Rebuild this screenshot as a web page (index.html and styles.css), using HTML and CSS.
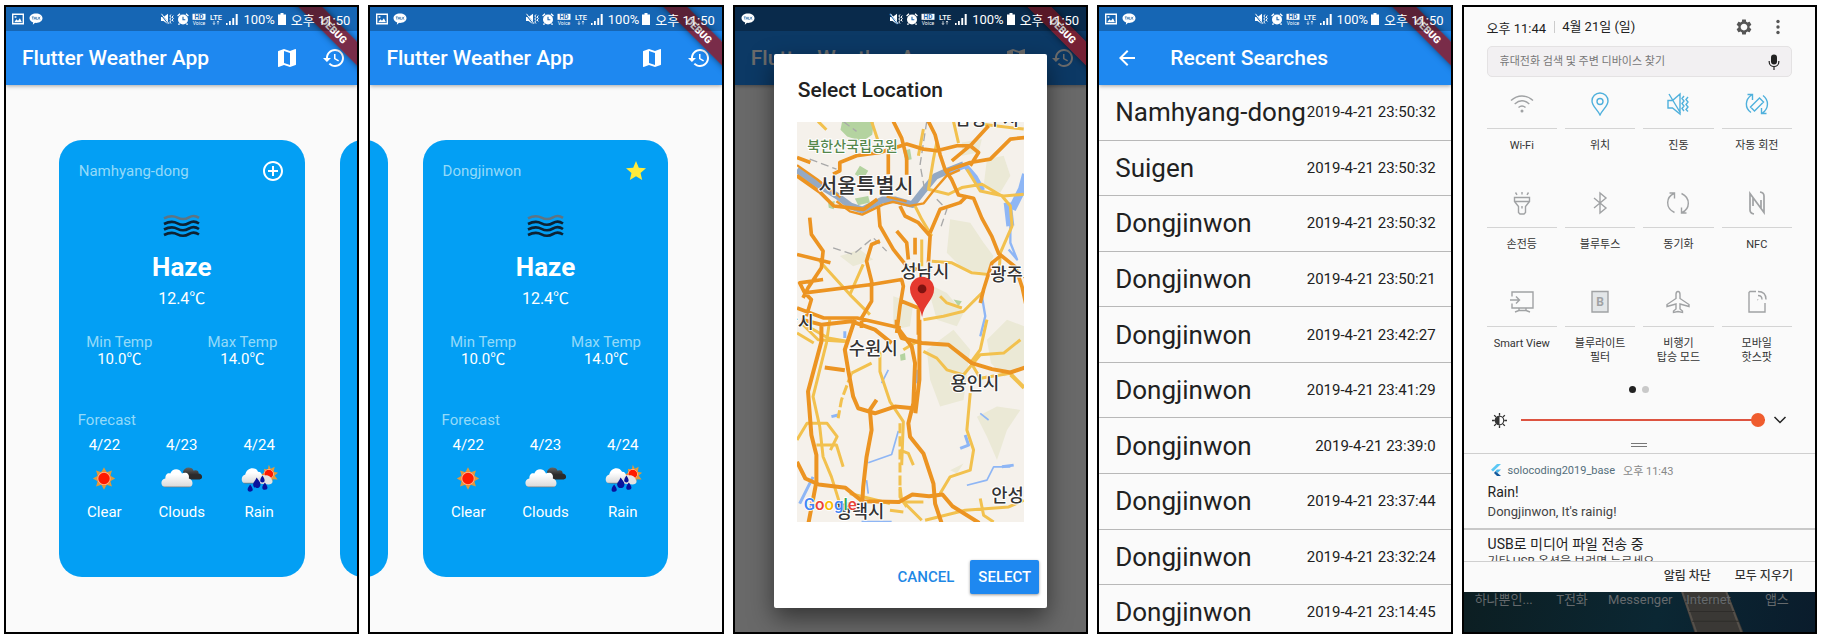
FILE: index.html
```html
<!DOCTYPE html>
<html lang="ko">
<head>
<meta charset="utf-8">
<meta name="viewport" content="width=device-width, initial-scale=1">
<title>Flutter Weather App</title>
<link rel="stylesheet" href="styles.css">
</head>
<body>
<svg class="sprite" aria-hidden="true">
  <symbol id="i-map" viewBox="0 0 24 24"><path d="M20.5 3l-.16.03L15 5.1 9 3 3.36 4.9c-.21.07-.36.25-.36.48V20.5c0 .28.22.5.5.5l.16-.03L9 18.9l6 2.1 5.64-1.9c.21-.07.36-.25.36-.48V3.5c0-.28-.22-.5-.5-.5zM15 19l-6-2.11V5l6 2.11V19z"/></symbol>
  <symbol id="i-history" viewBox="0 0 24 24"><path d="M13 3c-4.97 0-9 4.03-9 9H1l3.89 3.89.07.14L9 12H6c0-3.87 3.13-7 7-7s7 3.13 7 7-3.13 7-7 7c-1.93 0-3.68-.79-4.94-2.06l-1.42 1.42C8.27 19.99 10.51 21 13 21c4.97 0 9-4.03 9-9s-4.03-9-9-9zm-1 5v5l4.28 2.54.72-1.21-3.5-2.08V8H12z"/></symbol>
  <symbol id="i-back" viewBox="0 0 24 24"><path d="M20 11H7.83l5.59-5.59L12 4l-8 8 8 8 1.41-1.41L7.83 13H20v-2z"/></symbol>
  <symbol id="i-add" viewBox="0 0 24 24"><path d="M13 7h-2v4H7v2h4v4h2v-4h4v-2h-4V7zm-1-5C6.48 2 2 6.48 2 12s4.48 10 10 10 10-4.48 10-10S17.52 2 12 2zm0 18c-4.41 0-8-3.59-8-8s3.59-8 8-8 8 3.59 8 8-3.59 8-8 8z"/></symbol>
  <symbol id="i-star" viewBox="0 0 24 24"><path d="M12 17.27L18.18 21l-1.64-7.03L22 9.24l-7.19-.61L12 2 9.19 8.63 2 9.24l5.46 4.73L5.82 21z"/></symbol>
  <symbol id="i-picture" viewBox="0 0 12 12"><path fill-rule="evenodd" d="M0 .5h12v11H0zM1.400 1.900v8.200h9.200V1.900zM2.200 9.200l2.200-3 1.600 1.600 1.900-2.600 2 4zM2.600 3.200h1.800v1.500H2.600z"/></symbol>
  <symbol id="i-talk" viewBox="0 0 14 12"><path d="M7 .5c3.600 0 6.500 2.100 6.500 4.700S10.600 9.900 7 9.900l-.9-.1L3.800 11.700l.4-2.300C2 8.700.5 7.100.5 5.200.5 2.600 3.400.5 7 .5z"/><path d="M2.800 3.900h2M3.800 3.900v2.600M5.200 6.500l.8-2.600.8 2.600M7.700 3.900v2.600h1M9.800 3.900v2.600M11.300 3.900L9.800 5.200l1.500 1.300" fill="none" stroke="#2a6ba8" stroke-width=".7"/></symbol>
  <symbol id="i-vibrate-s" viewBox="0 0 14 12"><path d="M1 4h2.500L8 .8v10.400L3.500 8H1z"/><path d="M.8 1l8 10" stroke="#1a66b0" stroke-width="1.600"/><path d="M1.500.8l7.500 10M11 1.500l-1.200 1.500L11 4.500 9.800 6 11 7.500 9.800 9l1.200 1.500M13.300 2.500L12.200 4l1.100 1.500L12.200 7l1.100 1.500" fill="none" stroke="#fff" stroke-width="1"/></symbol>
  <symbol id="i-alarm-s" viewBox="0 0 12 12"><circle cx="6" cy="6.500" r="5"/><path d="M.6 3L3 .8M11.400 3L9 .8M2.500 10.500l-1 1.200M9.500 10.500l1 1.200" stroke="#fff" stroke-width="1.400"/><path d="M6 3.800v3h2.300" fill="none" stroke="#1a66b0" stroke-width="1.100"/></symbol>
  <symbol id="i-hd" viewBox="0 0 14 12"><path d="M.5.8h13v6H.5z"/><text x="7" y="6" font-size="6.500" font-weight="700" text-anchor="middle" fill="#1a66b0">HD</text><text x="7" y="11.500" font-size="5" text-anchor="middle">Voice</text></symbol>
  <symbol id="i-lte" viewBox="0 0 14 12"><text x="7" y="6.500" font-size="7.500" font-weight="500" text-anchor="middle">LTE</text><path d="M5 8v3.500M4 10.300l1 1.200 1-1.200M9 11.500V8M8 9.200L9 8l1 1.200" fill="none" stroke="#fff" stroke-width=".7"/></symbol>
  <symbol id="i-signal" viewBox="0 0 12 12"><path d="M0 10h1.600v2H0zM3 8h1.800v4H3zM6.300 5h1.900v7H6.300zM9.700 1h2v11h-2z"/></symbol>
  <symbol id="i-battery" viewBox="0 0 8 12"><path d="M2.500 0h3v1.500H8V12H0V1.500h2.500z"/></symbol>

  <symbol id="w-haze" viewBox="0 0 50 50"><g fill="none" stroke-width="2.600"><path stroke="#5e7483" d="M7 17.300c6-3 10-2.500 13.500-.7s7.500 2 11.500-.3 7-1.500 10 .5"/><path stroke="#0d2233" d="M7 23c6-3 10-2.500 13.500-.7s7.500 2 11.500-.3 7-1.500 10 .5M7 28.500c6-3 10-2.500 13.500-.7s7.500 2 11.500-.3 7-1.500 10 .5M7 34c6-3 10-2.500 13.500-.7s7.500 2 11.500-.3 7-1.500 10 .5"/></g></symbol>
  <radialGradient id="g-sun"><stop offset="0" stop-color="#ff1a00"/><stop offset=".72" stop-color="#ff1a00"/><stop offset=".86" stop-color="#ffb08c"/><stop offset="1" stop-color="#e88a28"/></radialGradient>
  <linearGradient id="g-cloud" x1="0" y1="0" x2="0" y2="1"><stop offset=".3" stop-color="#fff"/><stop offset=".92" stop-color="#dcdcdc"/><stop offset="1" stop-color="#777"/></linearGradient>
  <linearGradient id="g-dark" x1="0" y1="0" x2="0" y2="1"><stop offset="0" stop-color="#666"/><stop offset=".6" stop-color="#2b2b2b"/></linearGradient>
  <symbol id="w-sun" viewBox="0 0 48 48"><path fill="#e09a3c" d="M24 12.500l2.700 5 5.400-1.700-1.600 5.500 4.900 2.700-4.900 2.700 1.600 5.500-5.400-1.700-2.700 5-2.700-5-5.400 1.700 1.600-5.500-4.900-2.700 4.900-2.700-1.600-5.500 5.400 1.700z"/><circle cx="24" cy="24" r="7.300" fill="url(#g-sun)"/></symbol>
  <symbol id="w-clouds" viewBox="0 0 48 48"><path fill="url(#g-dark)" d="M25 17c1-3 4-5 7-4 2 0 3 1 4 3 3-1 5 0 5 3 4 0 5 6 1 6H29z"/><path fill="url(#g-cloud)" d="M8 33c-7 0-6-9-1-9 0-5 3-6 5-5 2-6 10-6 12 0 4-2 8 0 7 5 5 1 5 9 0 9z"/></symbol>
  <symbol id="w-rain" viewBox="0 0 48 48"><path fill="#e09a3c" d="M34 10l2 4 4-2-1 5 4.500 1-3.500 3 3 4-5-.3-1 4.300-4-3-5 1 2-4-4-3 4-2-1-4 4 1z"/><circle cx="34" cy="19.500" r="5.500" fill="url(#g-sun)"/><path fill="url(#g-cloud)" d="M11 29c-6 1-6-8-1-9 1-7 10-9 13-3 3 0 4 2 4 4 5-2 8 8 2 8z"/><path fill="#e4e4e4" d="M24 29c-3-6 2-8 6-8 3-1 7 2 7 4 2 3 0 5-3 5z"/><path fill="#0a139c" d="M21.500 23c3 4 4 5 4 7 0 5-7.500 5-7.500 0 0-2 2-3 3.500-7zM27.500 21c3 4 3 7 0 7s-3-3 0-7zM15 30c3 4 4 7 0 7.500-4 0-3-4 0-7.500zM30 28c3 4 4 7 0 7.500-4 0-3-4 0-7.500z"/></symbol>
</svg>

<main class="gallery">

  <section class="phone">
    <div class="statusbar">
      <svg class="s12"><use href="#i-picture"/></svg><svg class="s14"><use href="#i-talk"/></svg>
      <div class="statusbar-right">
        <svg class="s14"><use href="#i-vibrate-s"/></svg><svg class="s12"><use href="#i-alarm-s"/></svg><svg class="s14"><use href="#i-hd"/></svg><svg class="s14"><use href="#i-lte"/></svg><svg class="s12"><use href="#i-signal"/></svg>
        <span>100%</span><svg class="s8"><use href="#i-battery"/></svg><span>오후 11:50</span>
      </div>
    </div>
    <header class="appbar">
      <h1>Flutter Weather App</h1>
      <button class="icon-btn" aria-label="Map"><svg><use href="#i-map"/></svg></button>
      <button class="icon-btn" aria-label="History"><svg><use href="#i-history"/></svg></button>
    </header>
    <div class="debug">DEBUG</div>
    <div class="carousel carousel-first">
      <article class="card">
        <div class="card-head"><span class="soft">Namhyang-dong</span><button class="icon-btn" aria-label="Add"><svg><use href="#i-add"/></svg></button></div>
        <svg class="now-icon"><use href="#w-haze"/></svg>
        <h2>Haze</h2>
        <p class="now-temp">12.4℃</p>
        <dl class="range"><div><dt>Min Temp</dt><dd>10.0℃</dd></div><div><dt>Max Temp</dt><dd>14.0℃</dd></div></dl>
        <h3>Forecast</h3>
        <ul class="forecast">
          <li><span>4/22</span><svg><use href="#w-sun"/></svg><span>Clear</span></li>
          <li><span>4/23</span><svg><use href="#w-clouds"/></svg><span>Clouds</span></li>
          <li><span>4/24</span><svg><use href="#w-rain"/></svg><span>Rain</span></li>
        </ul>
      </article>
      <article class="card"></article>
    </div>
  </section>

  <section class="phone">
    <div class="statusbar">
      <svg class="s12"><use href="#i-picture"/></svg><svg class="s14"><use href="#i-talk"/></svg>
      <div class="statusbar-right">
        <svg class="s14"><use href="#i-vibrate-s"/></svg><svg class="s12"><use href="#i-alarm-s"/></svg><svg class="s14"><use href="#i-hd"/></svg><svg class="s14"><use href="#i-lte"/></svg><svg class="s12"><use href="#i-signal"/></svg>
        <span>100%</span><svg class="s8"><use href="#i-battery"/></svg><span>오후 11:50</span>
      </div>
    </div>
    <header class="appbar">
      <h1>Flutter Weather App</h1>
      <button class="icon-btn" aria-label="Map"><svg><use href="#i-map"/></svg></button>
      <button class="icon-btn" aria-label="History"><svg><use href="#i-history"/></svg></button>
    </header>
    <div class="debug">DEBUG</div>
    <div class="carousel carousel-second">
      <article class="card"></article>
      <article class="card">
        <div class="card-head"><span class="soft">Dongjinwon</span><button class="icon-btn starred" aria-label="Remove"><svg><use href="#i-star"/></svg></button></div>
        <svg class="now-icon"><use href="#w-haze"/></svg>
        <h2>Haze</h2>
        <p class="now-temp">12.4℃</p>
        <dl class="range"><div><dt>Min Temp</dt><dd>10.0℃</dd></div><div><dt>Max Temp</dt><dd>14.0℃</dd></div></dl>
        <h3>Forecast</h3>
        <ul class="forecast">
          <li><span>4/22</span><svg><use href="#w-sun"/></svg><span>Clear</span></li>
          <li><span>4/23</span><svg><use href="#w-clouds"/></svg><span>Clouds</span></li>
          <li><span>4/24</span><svg><use href="#w-rain"/></svg><span>Rain</span></li>
        </ul>
      </article>
    </div>
  </section>

  <section class="phone">
    <div class="statusbar">
      <svg class="s14"><use href="#i-talk"/></svg>
      <div class="statusbar-right">
        <svg class="s14"><use href="#i-vibrate-s"/></svg><svg class="s12"><use href="#i-alarm-s"/></svg><svg class="s14"><use href="#i-hd"/></svg><svg class="s14"><use href="#i-lte"/></svg><svg class="s12"><use href="#i-signal"/></svg>
        <span>100%</span><svg class="s8"><use href="#i-battery"/></svg><span>오후 11:50</span>
      </div>
    </div>
    <header class="appbar">
      <h1>Flutter Weather App</h1>
      <button class="icon-btn" aria-label="Map"><svg><use href="#i-map"/></svg></button>
      <button class="icon-btn" aria-label="History"><svg><use href="#i-history"/></svg></button>
    </header>
    <div class="scrim">
      <div class="dialog" role="dialog" aria-label="Select Location">
        <h2>Select Location</h2>
        <svg class="map" viewBox="52 37 680 1200" preserveAspectRatio="xMidYMid slice">
          <path fill="#f5f1eb" d="M0 0h800v1300H0z"/>
          <g fill="#ebe9d6">
            <path d="M620 150l50-10 20 60-30 50-50-20zM510 330l60 10 40 60 30 40-20 50-70-10-50-50zM545 100l60-10-10 40-50 10zM340 560l60 20-10 70-50 10zM440 520l60 30 50 60-20 40-60-20zM180 440l60-20 40 30-60 20z"/>
            <path d="M440 720l80-60 50 60-20 150-70 20-30-80zM620 690l60-60 52 20v120l-60 30-40-40zM590 920l60-30 70 10-40 60-30 90-30-70zM510 1080l40-20-20 30z"/>
          </g>
          <g fill="#b4d3a0"><path d="M187 37h95l-5 40-30 20-45-15-20-20zM240 170l25 15-15 25-25-15zM370 125l20-5 5 30-20 5zM225 268l40-8 5 20-35 8zM520 570l25 5-10 15zM145 280l20-5-3 25-15-5zM360 735l15-5 2 20-15 3z"/></g>
          <g fill="none" stroke="#8eb6f5" stroke-linejoin="round">
            <path stroke="#94a9c4" stroke-width="20" d="M52 182l60 42 60 36 40 30 35 12 60-30 40 0 50 14 30-38 38-46 40-18 45-18"/>
            <path stroke-width="16" d="M510 187l45-18 30 35 22 40"/>
            <path stroke-width="24" d="M690 350l-8-70M695 300l30-60 12-45"/>
            <path stroke-width="7" d="M690 340l0 60 20 50-25-30M605 560l10 60-15 60"/>
            <path stroke-width="5" d="M265 1058l70-25 20-70M325 780l-20 40M560 1125l60-15 20-40 50 0M260 1110l5 40M600 910l25 20"/>
            <path stroke-width="9" d="M100 1100l-40 80M195 665v20M155 920l20-5M540 1015l25-10-10-30M665 1070l35-5M410 780v40M245 1236h90"/>
          </g>
          <g fill="none" stroke="#a9a9a9" stroke-width="4" stroke-dasharray="24 12">
            <path d="M440 37l-20 130 15 80M90 150l80 30M160 415l60 20 60-50 40 40M470 270l30 30-20 60M190 37l40 30"/>
          </g>
          <g fill="none" stroke="#f2c14e" stroke-width="9" stroke-linejoin="round">
            <path d="M115 37l25 25M520 37l15 65M430 60l-15 80M470 100l-10 50-15 90 60 15 40-20 60-10 60 35 25 30 5 60-35 80-5 80M560 180l40 65 70 15 60-5"/>
            <path d="M405 290l20 40 30 50M120 455l90 100 60 60M210 555l40-90M455 455l60 5 60 30 50 5M480 560l20 20 45 15M430 630l60-10 60-15 60-60"/>
            <path d="M425 390l0 80M275 37l20 60M600 45l130 15M75 645l70 40 60 10M52 670l50 30"/>
          </g>
          <g transform="translate(0 630)" fill="none" stroke="#f2c14e" stroke-width="9" stroke-linejoin="round">
            <path d="M65 10l50 50 80 5M150 0l-10 70-40 160 20 90 10 90 25 60 25 80M52 360l30-50 60 0 30 40-20 40M110 375l60 0 20 65M215 160l60-30M300 95l0 60 30 90 40 60-5 130M360 390l25 10 15 35"/>
            <path d="M420 60l-50 30M430 95l40 20 30 35 50 15 50-60 70-5 50-40M620 0l-20 90-30 40M570 220l-10 110 20 60-10 60-60 20-30 50M360 500l5 40 60 60M370 545l60 0M330 570l40 5M435 600l120-30 130-10 45-20M600 535l10 50 30 20M210 520l120 30M690 165l40 40M730 200l-40-40-90 15-30-50"/>
            <path stroke-dasharray="30 9" d="M215 160l-30 80-10 55M360 310l0 120 0 100 20 30"/>
          </g>
          <g fill="none" stroke="#ec9422" stroke-width="11" stroke-linejoin="round">
            <path stroke-width="7" d="M52 168l60 42 30 24 40 30M52 198l70 50M170 276l40 30 37 10 62-30 30-8 50 12 42-8 30-38 38-44 40-18M320 262l60 14"/>
            <path d="M52 145l40 15M160 195l20-10 0-25 50-20 70-10 80-25 50 15 40 5 60-15 40 0 25 20-25 40M340 37l25 50 15 60 0 50M325 195v-60M445 37l20 40 15 60 15 45 20 30 20 45 45 10 25 60 30 55 20 50 50 40 20 60 20 90M52 200l70 50 40 40 90 10 40-30M500 185l70-25 60-10 60-60 45-5M515 155l60-50 50-55"/>
            <path d="M295 290l5 60 40 70 40 50 30 10M360 290l15 30 40 20 35 40-5 80M350 365l30 35 5 50M405 385l0 50M450 370l30-70 60-20 20-20M90 325l5 50 35 50-5 50-40 60-15 30M52 435l100 25M300 395l-25 10-15 50 15 60 0 60-30 50 0 30M52 595l80 30 100 0 130 30M75 550l200-25 90-15 5 20-10 60-10 80M75 550l-15-30 70-10M75 550l20 20-15 50M415 590l0 85M365 575l50 20M660 440l-25 20-25 80-10 40"/>
          </g>
          <g transform="translate(0 630)" fill="none" stroke="#ec9422" stroke-width="12" stroke-linejoin="round">
            <path d="M65 0l60 15 90-10 70 25 50 40M125 15l0 50-40 150 10 130 15 60 0 80-25 130M225 0l-30 90 10 60 15 80 15 35 50 15 60-20 55 5M135 143l60 8M290 240l-20 30 5 60-15 80-10 90-3 50M350 0l0 20 45 60 10 50-5 120-15 60 5 40 40 50 30 90 5 60 20 60M418 0v180l-12 100"/>
            <path d="M350 15l15 40 60 15 80 5 70 55 60 18 55 10 45-15M52 425l25 50 40 18 80 10 50 40 110 2 40-22 50 5 40-5 30 35 80 50"/>
          </g>
          <g class="map-labels" text-anchor="middle">
            <text x="218" y="127" font-size="42" class="park">북한산국립공원</text>
            <text x="620" y="48" font-size="52">남양주시</text>
            <text x="258" y="252" font-size="62">서울특별시</text>
            <text x="434" y="506" font-size="53">성남시</text>
            <text x="703" y="514" font-size="53">광주시</text>
            <text x="30" y="654" font-size="52">안산시</text>
            <text x="280" y="736" font-size="53">수원시</text>
            <text x="584" y="840" font-size="53">용인시</text>
            <text x="706" y="1176" font-size="53">안성시</text>
            <text x="240" y="1222" font-size="53">평택시</text>
          </g>
          <path fill="#e5392f" d="M426 622c-5-38-36-52-36-84a36 36 0 0 1 72 0c0 32-31 46-36 84z"/><circle cx="426" cy="538" r="13" fill="#7f1310"/>
          <text class="google" x="72" y="1200" font-size="50"><tspan fill="#4285f4">G</tspan><tspan fill="#ea4335">o</tspan><tspan fill="#fbbc05">o</tspan><tspan fill="#4285f4">g</tspan><tspan fill="#34a853">l</tspan><tspan fill="#ea4335">e</tspan></text>
        </svg>
        <div class="dialog-actions"><button class="flat">CANCEL</button><button class="raised">SELECT</button></div>
      </div>
    </div>
    <div class="debug">DEBUG</div>
  </section>

  <section class="phone">
    <div class="statusbar">
      <svg class="s12"><use href="#i-picture"/></svg><svg class="s14"><use href="#i-talk"/></svg>
      <div class="statusbar-right">
        <svg class="s14"><use href="#i-vibrate-s"/></svg><svg class="s12"><use href="#i-alarm-s"/></svg><svg class="s14"><use href="#i-hd"/></svg><svg class="s14"><use href="#i-lte"/></svg><svg class="s12"><use href="#i-signal"/></svg>
        <span>100%</span><svg class="s8"><use href="#i-battery"/></svg><span>오후 11:50</span>
      </div>
    </div>
    <header class="appbar appbar-back">
      <button class="icon-btn" aria-label="Back"><svg><use href="#i-back"/></svg></button>
      <h1>Recent Searches</h1>
    </header>
    <div class="debug">DEBUG</div>
    <ul class="searches">
      <li><span>Namhyang-dong</span><time>2019-4-21 23:50:32</time></li>
      <li><span>Suigen</span><time>2019-4-21 23:50:32</time></li>
      <li><span>Dongjinwon</span><time>2019-4-21 23:50:32</time></li>
      <li><span>Dongjinwon</span><time>2019-4-21 23:50:21</time></li>
      <li><span>Dongjinwon</span><time>2019-4-21 23:42:27</time></li>
      <li><span>Dongjinwon</span><time>2019-4-21 23:41:29</time></li>
      <li><span>Dongjinwon</span><time>2019-4-21 23:39:0</time></li>
      <li><span>Dongjinwon</span><time>2019-4-21 23:37:44</time></li>
      <li><span>Dongjinwon</span><time>2019-4-21 23:32:24</time></li>
      <li><span>Dongjinwon</span><time>2019-4-21 23:14:45</time></li>
    </ul>
  </section>

  <section class="phone shade">
    <div class="quick">
      <header class="quick-head">
        <span class="clock">오후 11:44</span><span class="date">4월 21일 (일)</span>
        <button class="mini-btn" aria-label="설정"><svg viewBox="0 0 24 24"><path d="M19.430 12.980c.04-.32.07-.64.07-.98s-.03-.66-.07-.98l2.110-1.650c.19-.15.24-.42.12-.64l-2-3.460c-.12-.22-.39-.3-.61-.22l-2.490 1c-.52-.4-1.080-.73-1.690-.98l-.38-2.650C14.460 2.180 14.250 2 14 2h-4c-.25 0-.46.18-.49.42l-.38 2.650c-.61.25-1.170.59-1.690.98l-2.490-1c-.23-.09-.49 0-.61.22l-2 3.460c-.13.22-.07.49.12.64l2.110 1.650c-.04.32-.07.65-.07.98s.03.66.07.98l-2.110 1.650c-.19.15-.24.42-.12.64l2 3.460c.12.22.39.3.61.22l2.490-1c.52.4 1.080.73 1.690.98l.38 2.650c.03.24.24.42.49.42h4c.25 0 .46-.18.49-.42l.38-2.650c.61-.25 1.170-.59 1.690-.98l2.490 1c.23.09.49 0 .61-.22l2-3.460c.12-.22.07-.49-.12-.64l-2.110-1.650zM12 16.500c-2.480 0-4.500-2.020-4.500-4.500s2.020-4.500 4.500-4.500 4.500 2.020 4.500 4.500-2.020 4.500-4.500 4.500z"/></svg></button>
        <button class="mini-btn" aria-label="더보기"><svg viewBox="0 0 18 18"><circle cx="9" cy="3.500" r="1.700"/><circle cx="9" cy="9" r="1.700"/><circle cx="9" cy="14.500" r="1.700"/></svg></button>
      </header>
      <div class="search">
        <input type="text" aria-label="검색" placeholder="휴대전화 검색 및 주변 디바이스 찾기">
        <svg viewBox="0 0 18 18"><rect x="6" y="1.500" width="6" height="10" rx="3"/><path d="M4.200 8v1c0 6 9.600 6 9.600 0V8M9 13.500V17" fill="none" stroke="#222" stroke-width="1.200"/></svg>
      </div>
      <div class="tiles">
        <button class="tile"><svg viewBox="0 0 24 24"><path d="M1 8.500c6.500-6 15.500-6 22 0M4.700 12c4.500-4 10-4 14.600 0M8.500 15.500c2.200-1.800 4.800-1.800 7 0"/><circle cx="12" cy="19" r=".8" fill="currentColor"/></svg><span>Wi-Fi</span></button>
        <button class="tile on"><svg viewBox="0 0 24 24"><path d="M12 23C9 17 4 14 4 9a8 8 0 0 1 16 0c0 5-5 8-8 14z"/><circle cx="12" cy="9.500" r="3"/></svg><span>위치</span></button>
        <button class="tile on"><svg viewBox="0 0 24 24"><path d="M2 8.500h4.500L14 2v20l-7.500-6H2zM3 2l11.500 19M18 4l-2 2.500L18 9l-2 2.500 2 2.500-2 2.500 2 2.500M22 5l-2 2.500 2 2.500-2 2.500 2 2.500-2 2.500 2 2"/></svg><span>진동</span></button>
        <button class="tile on"><svg viewBox="0 0 24 24"><path d="M14.500 6l4 4-9 9-4-4zM6 20.500C-.5 16 0 7.500 6.500 3M2.500 2.500h5V8M18 3.500c6 4.500 6 13-.5 17.500M21.500 21.500h-5V16"/></svg><span>자동 회전</span></button>
        <button class="tile"><svg viewBox="0 0 24 24"><path d="M4.500 6.500h15v4l-4 5v6l-1.500 1.500h-4L8.500 21.500v-6l-4-5zM5 10.500h14M12 15v2.500M12 1v2.500M5.500 1.500L7 3.800M18.500 1.500L17 3.800"/></svg><span>손전등</span></button>
        <button class="tile"><svg viewBox="0 0 24 24"><path d="M6 7l12 10-6 5V2l6 5L6 17"/></svg><span>블루투스</span></button>
        <button class="tile"><svg viewBox="0 0 24 24"><path d="M8.500 21.500C-1 17 0 6 8 2.500M3.500 2h5v5.500M15.500 2.500C25 7 24 18 16 21.500M20.500 22h-5v-5.500"/></svg><span>동기화</span></button>
        <button class="tile"><svg viewBox="0 0 24 24"><path stroke-width="1.700" d="M9 23c-3-.5-4-1.500-4-4V2.500L16 17.500V9M15 1c3 .5 4 1.500 4 4v16.500L8 6.500V15"/></svg><span>NFC</span></button>
        <button class="tile"><svg viewBox="0 0 24 24"><path d="M2 6.500V2h21v16H2v-4.500M0 10h9M6 6.500l3.500 3.500L6 13.500M9 18v2.500l-4 1.500M16 18v2.500l4 1.500M9 20.500h7"/></svg><span>Smart View</span></button>
        <button class="tile"><svg viewBox="0 0 24 24"><path fill="#e3e6e8" d="M4 1.500h16v20.500H4z"/><text x="12" y="16" text-anchor="middle" font-size="12" font-weight="700" fill="currentColor" stroke="none">B</text></svg><span>블루라이트<br>필터</span></button>
        <button class="tile"><svg viewBox="0 0 24 24"><path d="M12 1.500c1.300 0 2 1.500 2 3v4l9 6v2l-9-2.500v5l2.500 2v1.500L12 21.500 7.500 22.500V21l2.500-2v-5L1 16.500v-2l9-6v-4c0-1.500.7-3 2-3z"/></svg><span>비행기<br>탑승 모드</span></button>
        <button class="tile"><svg viewBox="0 0 24 24"><path d="M11 1.500H5L4 2.500V22h16v-9M12.500 9.500l.5.500M13 5.500c2.500 0 4 1.500 4 4M13 1.500c5 0 8 3 8 8"/></svg><span>모바일<br>핫스팟</span></button>
      </div>
      <div class="dots"><i class="active"></i><i></i></div>
      <div class="brightness">
        <svg viewBox="0 0 16 16"><path d="M8 0v3M8 13v3M0 8h3M13 8h3M2.300 2.300l2 2M11.700 11.700l2 2M13.700 2.300l-2 2M4.300 11.700l-2 2" stroke="#333" stroke-width="1.400"/><circle cx="8" cy="8" r="4.500" fill="none" stroke="#333" stroke-width="1.200"/><path d="M8 3.500a4.500 4.500 0 0 0 0 9z"/></svg>
        <input type="range" aria-label="밝기" min="0" max="100" value="100">
        <button class="mini-btn" aria-label="펼치기"><svg viewBox="0 0 18 18"><path d="M3.500 6L9 11.500 14.500 6" fill="none" stroke="#222" stroke-width="1.500"/></svg></button>
      </div>
      <div class="handle"></div>
    </div>
    <article class="notice">
      <p class="notice-app"><svg viewBox="0 0 12 12"><path fill="#5bc8f5" d="M7 0h4L3 7.500 1 5.800z"/><path fill="#4ab6ea" d="M7 5.500h4L7.500 9 5.300 7.300z"/><path fill="#14599c" d="M5.300 7.300L7.500 9l3.500 3H7L4 9z"/></svg><b>solocoding2019_base</b><time>오후 11:43</time></p>
      <h3>Rain!</h3>
      <p class="notice-text">Dongjinwon, It's rainig!</p>
    </article>
    <article class="notice usb">
      <h3>USB로 미디어 파일 전송 중</h3>
      <p>기타 USB 옵션을 보려면 누르세요.</p>
    </article>
    <footer class="shade-actions"><button>알림 차단</button><button>모두 지우기</button></footer>
    <div class="wallpaper">
      <svg viewBox="0 0 351 41" preserveAspectRatio="none" aria-hidden="true"><path fill="#3a3835" d="M217 0h46l16 41h-49z"/><path stroke="#55504a" stroke-width="2" d="M218 0l14 41M262 0l15 41"/><path stroke="#2e2c2a" d="M221 10h45M225 20h45M228 30h47"/></svg>
      <ul><li>하나뿐인...</li><li>T전화</li><li>Messenger</li><li>Internet</li><li>앱스</li></ul>
    </div>
  </section>
</main>
</body>
</html>
```
FILE: styles.css
```css
* { box-sizing: border-box; }

body {
  margin: 0;
  background: #fff;
  color: #212121;
  font-family: Roboto, "Noto Sans CJK KR", sans-serif;
}

h1, h2, h3, p, ul, dl, dd { margin: 0; padding: 0; }
ul { list-style: none; }
button { border: 0; padding: 0; background: none; color: inherit; font: inherit; }

.sprite { position: absolute; width: 0; height: 0; }

.gallery {
  display: grid;
  grid-template-columns: repeat(5, minmax(0, 1fr));
  gap: 9px;
  height: 100vh;
  min-height: 640px;
  padding: 5px 5px 6px 4px;
}

.phone {
  position: relative;
  display: flex;
  flex-direction: column;
  overflow: hidden;
  border: 2px solid #000;
  background: #fafafa;
}

/* Status bar */
.statusbar {
  position: relative;
  z-index: 3;
  display: flex;
  flex: none;
  align-items: center;
  gap: 5px;
  height: 24px;
  padding: 0 7px 0 6px;
  background: rgba(0, 0, 0, .25);
  color: #fff;
  fill: #fff;
  font-size: 13px;
}
.statusbar-right { display: flex; align-items: center; gap: 3px; margin-left: auto; }
.statusbar-right span { margin-left: 2px; }
.s8 { width: 8px; height: 12px; }
.s12 { width: 12px; height: 12px; }
.s14 { width: 14px; height: 12px; }

/* App bar runs underneath the status bar */
.appbar {
  position: relative;
  z-index: 1;
  display: flex;
  flex: none;
  align-items: center;
  gap: 23px;
  height: 78px;
  margin-top: -24px;
  padding: 24px 11px 0 16px;
  background: #1e88f0;
  box-shadow: 0 1px 4px rgba(0, 0, 0, .35);
  color: #fff;
}
.appbar h1 { flex: 1; font-size: 21px; font-weight: 500; line-height: 24px; white-space: nowrap; }
.appbar-back { gap: 31px; }

.icon-btn { width: 24px; height: 24px; color: #fff; }
.icon-btn svg { display: block; width: 24px; height: 24px; fill: currentColor; }
.starred { color: #ffeb3b; }

.debug {
  position: absolute;
  z-index: 2;
  top: 15px;
  right: -37px;
  width: 120px;
  background: rgba(138, 28, 44, .85);
  box-shadow: 0 0 6px rgba(0, 0, 0, .5);
  color: #fff;
  font-size: 10px;
  font-weight: 900;
  line-height: 17px;
  text-align: center;
  transform: rotate(45deg);
}

/* Weather cards */
.carousel { display: flex; flex: 1; padding: 55px 0; }
.carousel-first { gap: 11.800%; padding-left: 15%; }
.carousel-second { gap: 6%; margin-left: -65%; }
.card {
  display: flex;
  flex: none;
  flex-direction: column;
  padding: 19px 0;
  border-radius: 23px;
  background: #039ff4;
  color: #fff;
  font-size: 15px;
}
.carousel-first .card { width: 82.400%; }
.carousel-second .card { width: 42.400%; }
.card-head { display: flex; align-items: center; justify-content: space-between; padding: 0 20px; }
.soft, .card dt, .card h3 { color: #93daf9; }
.now-icon { align-self: center; width: 50px; height: 50px; margin-top: 18px; }
.card h2 { font-size: 26px; font-weight: 700; line-height: 32px; text-align: center; }
.now-temp { margin-top: 6px; font-size: 16px; line-height: 20px; text-align: center; }
.range { display: flex; justify-content: space-around; margin-top: 25px; line-height: 17px; text-align: center; }
.card h3 { margin: 42px 19px 5px; font-size: 15px; font-weight: 400; line-height: 20px; }
.forecast { display: grid; grid-template-columns: repeat(3, 1fr); padding: 0 7px; line-height: 20px; }
.forecast li { display: flex; flex-direction: column; align-items: center; }
.forecast svg { width: 48px; height: 47px; }

/* Location dialog */
.scrim {
  position: absolute;
  inset: 0;
  z-index: 1;
  display: flex;
  padding: 47px 39px 24px;
  background: rgba(0, 0, 0, .58);
}
.dialog {
  display: flex;
  flex: 1;
  flex-direction: column;
  min-width: 0;
  border-radius: 2px;
  background: #fff;
  box-shadow: 0 10px 24px rgba(0, 0, 0, .5);
}
.dialog h2 { padding: 24px 24px 20px; font-size: 21px; font-weight: 500; line-height: 24px; }
.map { flex: 1; min-height: 0; margin: 0 23px; }
.map-labels { fill: #333; stroke: #fff; stroke-width: 6px; stroke-linejoin: round; paint-order: stroke; font-weight: 500; }
.map-labels .park { fill: #55874b; }
.google { font-weight: 500; stroke: #fff; stroke-width: 5px; paint-order: stroke; }
.dialog-actions { display: flex; gap: 8px; justify-content: flex-end; padding: 38px 8px 14px; font-size: 15px; font-weight: 500; line-height: 34px; }
.flat { padding: 0 8px; color: #1e88e5; }
.raised { padding: 0 8px; border-radius: 2px; background: #1e88f0; box-shadow: 0 1px 3px rgba(0, 0, 0, .4); color: #fff; }

/* Recent searches */
.searches { display: flex; flex: 1; flex-direction: column; min-height: 0; overflow: hidden; }
.searches li {
  display: flex;
  flex: 0 0 calc(100% / 9.840);
  align-items: center;
  justify-content: space-between;
  padding: 0 15px 0 16px;
  border-bottom: 1px solid #b8b8b8;
  font-size: 26px;
  white-space: nowrap;
}
.searches time { font-size: 15px; }

/* Notification shade */
.quick { padding: 7px 23px 0; border-bottom: 1px solid #cfcfcf; }
.quick-head { display: flex; align-items: center; height: 26px; font-size: 13px; }
.date { margin-left: 8px; padding-left: 7px; border-left: 1px solid #ccc; line-height: 12px; }
.mini-btn { width: 18px; height: 18px; color: #555; }
.mini-btn svg { display: block; width: 18px; height: 18px; fill: currentColor; }
.quick-head .mini-btn { margin-right: 5px; }
.date + .mini-btn { margin-right: 16px; margin-left: auto; }
.search { display: flex; align-items: center; height: 31px; margin-top: 6px; padding: 0 8px 0 12px; border: 1px solid #e4e2e3; border-radius: 5px; background: #f2f0f2; }
.search input { flex: 1; min-width: 0; padding: 0; border: 0; background: none; font: 11px Roboto, "Noto Sans CJK KR", sans-serif; }
.search input::placeholder { color: #777; }
.search svg { width: 18px; height: 18px; fill: #222; }
.tiles { display: grid; grid-template-columns: repeat(4, 1fr); grid-template-rows: 99px 99px 86px; gap: 0 8px; margin-top: 15px; }
.tile { display: flex; flex-direction: column; color: #a0a2a4; }
.tile svg { width: 24px; height: 24px; margin: 0 auto 12px; fill: none; stroke: currentColor; stroke-width: 1.400; }
.tile span { width: 100%; padding-top: 10px; border-top: 1px solid #d4d4d4; color: #333; font-size: 11px; line-height: 14px; white-space: nowrap; }
.tile.on { color: #4fb0dc; }
.dots { display: flex; gap: 6px; justify-content: center; margin-top: 10px; }
.dots i { width: 7px; height: 7px; border-radius: 50%; background: #c9c9c9; }
.dots .active { background: #222; }
.brightness { display: flex; align-items: center; height: 18px; margin-top: 18px; padding: 0 3px 0 5px; }
.brightness > svg { width: 15px; height: 15px; margin-right: 14px; fill: #333; }
.brightness input { flex: 1; min-width: 0; height: 18px; margin: 0; appearance: none; background: linear-gradient(#dd5340, #dd5340) center / 100% 2px no-repeat; }
.brightness input::-webkit-slider-thumb { width: 14px; height: 14px; appearance: none; border-radius: 50%; background: #ef5c2e; }
.brightness .mini-btn { margin-left: 6px; }
.handle { width: 16px; height: 4px; margin: 14px auto 6px; border: solid #777; border-width: 1px 0; }
.notice { height: 74px; padding: 7px 24px 0; color: #444; }
.notice h3 { color: #222; font-size: 14px; font-weight: 400; line-height: 18px; }
.notice-app { display: flex; align-items: center; height: 18px; color: #888; font-size: 11px; }
.notice-app svg { width: 12px; height: 12px; margin: 0 6px 0 2px; }
.notice-app b { margin-right: 8px; color: #546e7a; font-weight: 400; }
.notice-app + h3 { margin-top: 4px; }
.notice-text { margin-top: 2px; font-size: 13px; line-height: 18px; }
.usb { height: 33px; padding-top: 5px; overflow: hidden; border-top: 2px solid #c8c8c8; }
.usb p { font-size: 12px; line-height: 18px; }
.shade-actions { display: flex; gap: 24px; justify-content: flex-end; height: 31px; padding-right: 22px; border-top: 1px solid #cfcfcf; background: #fafafa; font-size: 12px; font-weight: 500; line-height: 28px; color: #333; }
.shade-actions button { align-self: flex-start; }
.wallpaper { position: relative; flex: 1; min-height: 0; background: linear-gradient(100deg, #0c1e22, #0b2733 55%, #0a1c2c); }
.wallpaper svg { position: absolute; width: 100%; height: 100%; }
.wallpaper ul { position: relative; display: grid; grid-template-columns: repeat(5, 1fr); padding: 0 4px 0 6px; color: #65696c; font-size: 13px; line-height: 15px; text-align: center; white-space: nowrap; }
```
